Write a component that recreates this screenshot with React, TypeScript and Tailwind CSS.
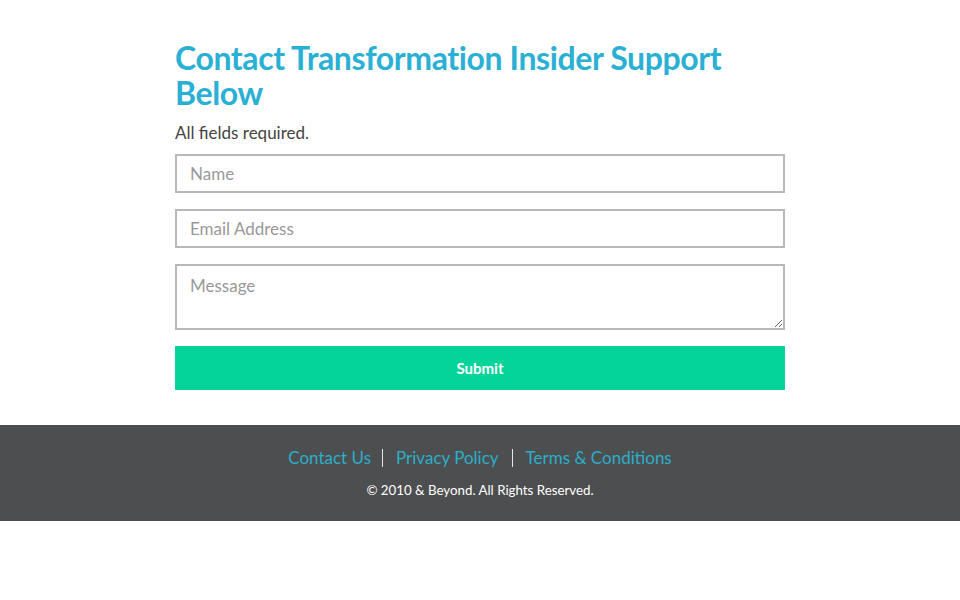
import React from "react";

export default function App() {
  const font = { fontFamily: "Lato, 'Open Sans', sans-serif" };
  return (
    <div className="w-[960px] h-[600px] bg-white" style={font}>
      <div className="mx-auto w-[610px] pt-[40px] pb-[35px]">
        <h1 className="text-[32px] leading-[35px] font-bold text-[#2ab0d4] tracking-[-0.4px]">
          Contact Transformation Insider Support Below
        </h1>
        <p className="mt-[12px] text-[17px] leading-[22px] text-[#444]">All fields required.</p>
        <form className="mt-[10px] flex flex-col">
          <input
            placeholder="Name"
            className="h-[39px] w-full border-2 border-[#b8b8b8] px-[13px] text-[17px] text-[#333] placeholder:text-[#999] outline-none"
          />
          <input
            placeholder="Email Address"
            className="mt-[16px] h-[39px] w-full border-2 border-[#b8b8b8] px-[13px] text-[17px] text-[#333] placeholder:text-[#999] outline-none"
          />
          <textarea
            placeholder="Message"
            className="mt-[16px] h-[66px] w-full border-2 border-[#b8b8b8] px-[13px] pt-[9px] text-[17px] leading-[22px] text-[#333] placeholder:text-[#999] outline-none"
          />
          <button
            type="button"
            className="mt-[16px] h-[44px] w-full bg-[#05d49a] text-white text-[15px] font-bold"
          >
            Submit
          </button>
        </form>
      </div>
      <footer className="h-[96px] bg-[#4d4e50] flex flex-col items-center pt-[24px]">
        <div className="flex items-center text-[17px] leading-[22px]">
          <a className="text-[#2aafc9] pr-[11px] border-r border-[#e5e5e5] leading-[18px]">Contact Us</a>
          <a className="text-[#2aafc9] px-[13px] border-r border-[#e5e5e5] leading-[18px]">Privacy Policy</a>
          <a className="text-[#2aafc9] pl-[13px] leading-[18px]">Terms &amp; Conditions</a>
        </div>
        <p className="mt-[14px] text-[13.3px] leading-[18px] text-white">© 2010 &amp; Beyond. All Rights Reserved.</p>
      </footer>
    </div>
  );
}
